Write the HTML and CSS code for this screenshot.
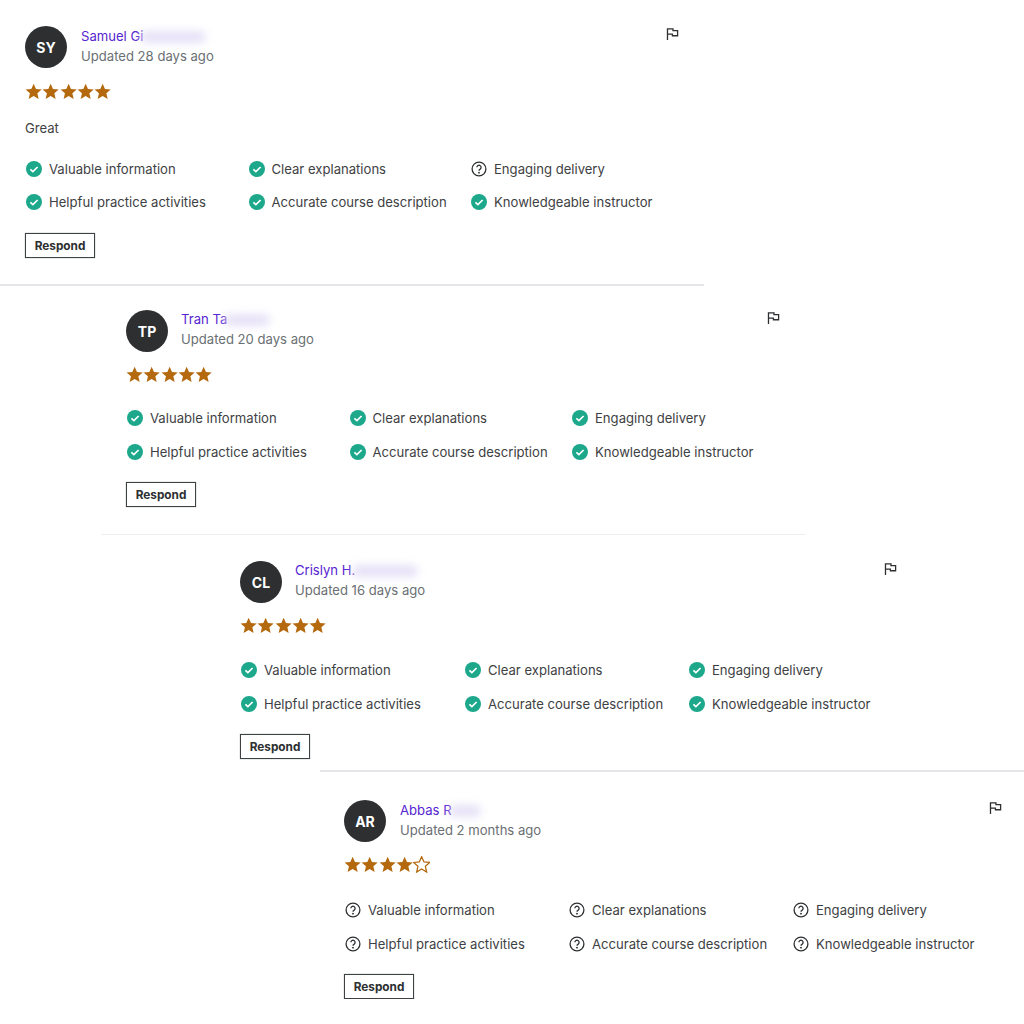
FILE: index.html
```html
<!DOCTYPE html>
<html lang="en">
<head>
    <meta charset="UTF-8">
    <title>Course reviews</title>
    <link rel="stylesheet" href="styles.css">
</head>
<body>
    <svg class="sprites" width="0" height="0">
        <symbol id="star" viewBox="0 0 16 16"><path d="M8 .6l2.2 5 5.4.5-4.1 3.6 1.2 5.4L8 12.3l-4.7 2.8 1.2-5.4L.4 6.1l5.4-.5z"/></symbol>
        <symbol id="check" viewBox="0 0 16 16"><circle cx="8" cy="8" r="8" fill="#1da88c"/><path d="M4.4 8.3l2.5 2.3 4.7-4.6" fill="none" stroke="#fff" stroke-width="1.7"/></symbol>
        <symbol id="help" viewBox="0 0 16 16"><circle cx="8" cy="8" r="6.9" fill="none" stroke="#2d2f31" stroke-width="1.3"/><path d="M5.9 6.3a2.1 2.1 0 1 1 3.3 1.8c-.8.5-1.2.9-1.2 1.7" fill="none" stroke="#2d2f31" stroke-width="1.3"/><circle cx="8" cy="11.7" r=".9" fill="#2d2f31"/></symbol>
        <symbol id="flag" viewBox="0 0 14 14"><path d="M1.6 13.5V1.5h5.9v1.8h5v5.6H6.9V7.1H1.6" fill="none" stroke="#2d2f31" stroke-width="1.4"/></symbol>
    </svg>

    <div class="review review-one">
        <div class="review-head">
            <div class="avatar">SY</div>
            <div class="who">
                <div class="name">Samuel Gi<span class="smudge smudge-long"></span></div>
                <div class="updated">Updated 28 days ago</div>
            </div>
            <svg class="flag"><use href="#flag"/></svg>
        </div>
        <div class="stars">
            <svg><use href="#star"/></svg><svg><use href="#star"/></svg><svg><use href="#star"/></svg><svg><use href="#star"/></svg><svg><use href="#star"/></svg>
        </div>
        <p class="comment">Great</p>
        <div class="tags">
            <div class="tag"><svg><use href="#check"/></svg>Valuable information</div>
            <div class="tag"><svg><use href="#check"/></svg>Clear explanations</div>
            <div class="tag"><svg><use href="#help"/></svg>Engaging delivery</div>
            <div class="tag"><svg><use href="#check"/></svg>Helpful practice activities</div>
            <div class="tag"><svg><use href="#check"/></svg>Accurate course description</div>
            <div class="tag"><svg><use href="#check"/></svg>Knowledgeable instructor</div>
        </div>
        <button class="respond">Respond</button>
    </div>
    <hr class="rule rule-one">

    <div class="review review-two">
        <div class="review-head">
            <div class="avatar">TP</div>
            <div class="who">
                <div class="name">Tran Ta<span class="smudge smudge-mid"></span></div>
                <div class="updated">Updated 20 days ago</div>
            </div>
            <svg class="flag"><use href="#flag"/></svg>
        </div>
        <div class="stars">
            <svg><use href="#star"/></svg><svg><use href="#star"/></svg><svg><use href="#star"/></svg><svg><use href="#star"/></svg><svg><use href="#star"/></svg>
        </div>
        <div class="tags">
            <div class="tag"><svg><use href="#check"/></svg>Valuable information</div>
            <div class="tag"><svg><use href="#check"/></svg>Clear explanations</div>
            <div class="tag"><svg><use href="#check"/></svg>Engaging delivery</div>
            <div class="tag"><svg><use href="#check"/></svg>Helpful practice activities</div>
            <div class="tag"><svg><use href="#check"/></svg>Accurate course description</div>
            <div class="tag"><svg><use href="#check"/></svg>Knowledgeable instructor</div>
        </div>
        <button class="respond">Respond</button>
    </div>
    <hr class="rule rule-two">

    <div class="review review-three">
        <div class="review-head">
            <div class="avatar">CL</div>
            <div class="who">
                <div class="name">Crislyn H.<span class="smudge smudge-long"></span></div>
                <div class="updated">Updated 16 days ago</div>
            </div>
            <svg class="flag"><use href="#flag"/></svg>
        </div>
        <div class="stars">
            <svg><use href="#star"/></svg><svg><use href="#star"/></svg><svg><use href="#star"/></svg><svg><use href="#star"/></svg><svg><use href="#star"/></svg>
        </div>
        <div class="tags">
            <div class="tag"><svg><use href="#check"/></svg>Valuable information</div>
            <div class="tag"><svg><use href="#check"/></svg>Clear explanations</div>
            <div class="tag"><svg><use href="#check"/></svg>Engaging delivery</div>
            <div class="tag"><svg><use href="#check"/></svg>Helpful practice activities</div>
            <div class="tag"><svg><use href="#check"/></svg>Accurate course description</div>
            <div class="tag"><svg><use href="#check"/></svg>Knowledgeable instructor</div>
        </div>
        <button class="respond">Respond</button>
    </div>
    <hr class="rule rule-three">

    <div class="review review-four">
        <div class="review-head">
            <div class="avatar">AR</div>
            <div class="who">
                <div class="name">Abbas R<span class="smudge smudge-short"></span></div>
                <div class="updated">Updated 2 months ago</div>
            </div>
            <svg class="flag"><use href="#flag"/></svg>
        </div>
        <div class="stars">
            <svg><use href="#star"/></svg><svg><use href="#star"/></svg><svg><use href="#star"/></svg><svg><use href="#star"/></svg><svg class="empty"><use href="#star"/></svg>
        </div>
        <div class="tags">
            <div class="tag"><svg><use href="#help"/></svg>Valuable information</div>
            <div class="tag"><svg><use href="#help"/></svg>Clear explanations</div>
            <div class="tag"><svg><use href="#help"/></svg>Engaging delivery</div>
            <div class="tag"><svg><use href="#help"/></svg>Helpful practice activities</div>
            <div class="tag"><svg><use href="#help"/></svg>Accurate course description</div>
            <div class="tag"><svg><use href="#help"/></svg>Knowledgeable instructor</div>
        </div>
        <button class="respond">Respond</button>
    </div>
</body>
</html>
```

FILE: styles.css
```css
/* Basic styling */
* { box-sizing: border-box; margin: 0; padding: 0; }
body { font-family: Inter, "Liberation Sans", sans-serif; background-color: #fff; color: #3e4143; overflow-x: hidden; }
.sprites { display: block; height: 0; }

/* One review block, each is shifted across the page */
.review { width: 654px; }
.review-one { margin-left: 25px; padding-top: 26px; }
.review-two { margin-left: 126px; padding-top: 24px; }
.review-three { margin-left: 240px; padding-top: 26px; width: 657px; }
.review-four { margin-left: 344px; padding-top: 28px; width: 658px; }

.review-head { display: flex; align-items: flex-start; height: 42px; }
.avatar { width: 42px; height: 42px; border-radius: 50%; background-color: #2d2f31; color: #fff; font-size: 14px; font-weight: 700; display: flex; justify-content: center; align-items: center; flex-shrink: 0; }
.who { margin-left: 13px; flex: 1; }
.review-one .who, .review-four .who { margin-left: 14px; margin-top: 1px; }
.name { font-size: 13.1px; line-height: 19px; color: #5624d0; display: flex; align-items: center; }
.updated { font-size: 13.1px; line-height: 20px; color: #6a6f73; }
.smudge { display: block; height: 12px; margin-left: -3px; border-radius: 7px; background-color: #e6e1f7; filter: blur(4px); }
.smudge-long { width: 66px; }
.smudge-mid { width: 46px; }
.smudge-short { width: 32px; }
.flag { width: 13px; height: 14px; margin-top: 1px; }

.stars { display: flex; margin-top: 14px; height: 17px; }
.review-one .stars { margin-top: 15px; }
.stars svg { width: 17.3px; height: 17px; fill: #b4690e; }
.stars svg.empty { fill: none; stroke: #b4690e; stroke-width: 1.2; }

.comment { font-size: 13.1px; line-height: 20px; margin-top: 18px; }

.tags { display: grid; grid-template-columns: repeat(3, 222.5px); row-gap: 14px; margin-left: 1px; }
.review-one .tags { margin-top: 21px; row-gap: 13px; }
.review-two .tags { margin-top: 25px; }
.review-three .tags, .review-four .tags { margin-top: 26px; grid-template-columns: repeat(3, 224px); }
.review-four .tags { margin-top: 27px; }
.tag { display: flex; align-items: center; font-size: 13.1px; line-height: 20px; white-space: nowrap; }
.tag svg { width: 16px; height: 16px; margin-right: 7px; flex-shrink: 0; }

.respond { display: block; margin-top: 20px; width: 70px; height: 25px; background-color: #fff; border: 1px solid #3e4143; box-shadow: 0 0 1px #8a8d90; font-family: inherit; font-size: 11.8px; font-weight: 700; color: #2d2f31; }
.review-one .respond { margin-top: 21px; }

.rule { border: none; height: 2px; background-color: #e4e6e9; }
.rule-one { margin-top: 26px; width: 704px; }
.rule-two { margin-top: 27px; margin-left: 101px; width: 705px; height: 1px; background-color: #eeeff1; }
.rule-three { margin-top: 11px; margin-left: 320px; width: 704px; }
```
